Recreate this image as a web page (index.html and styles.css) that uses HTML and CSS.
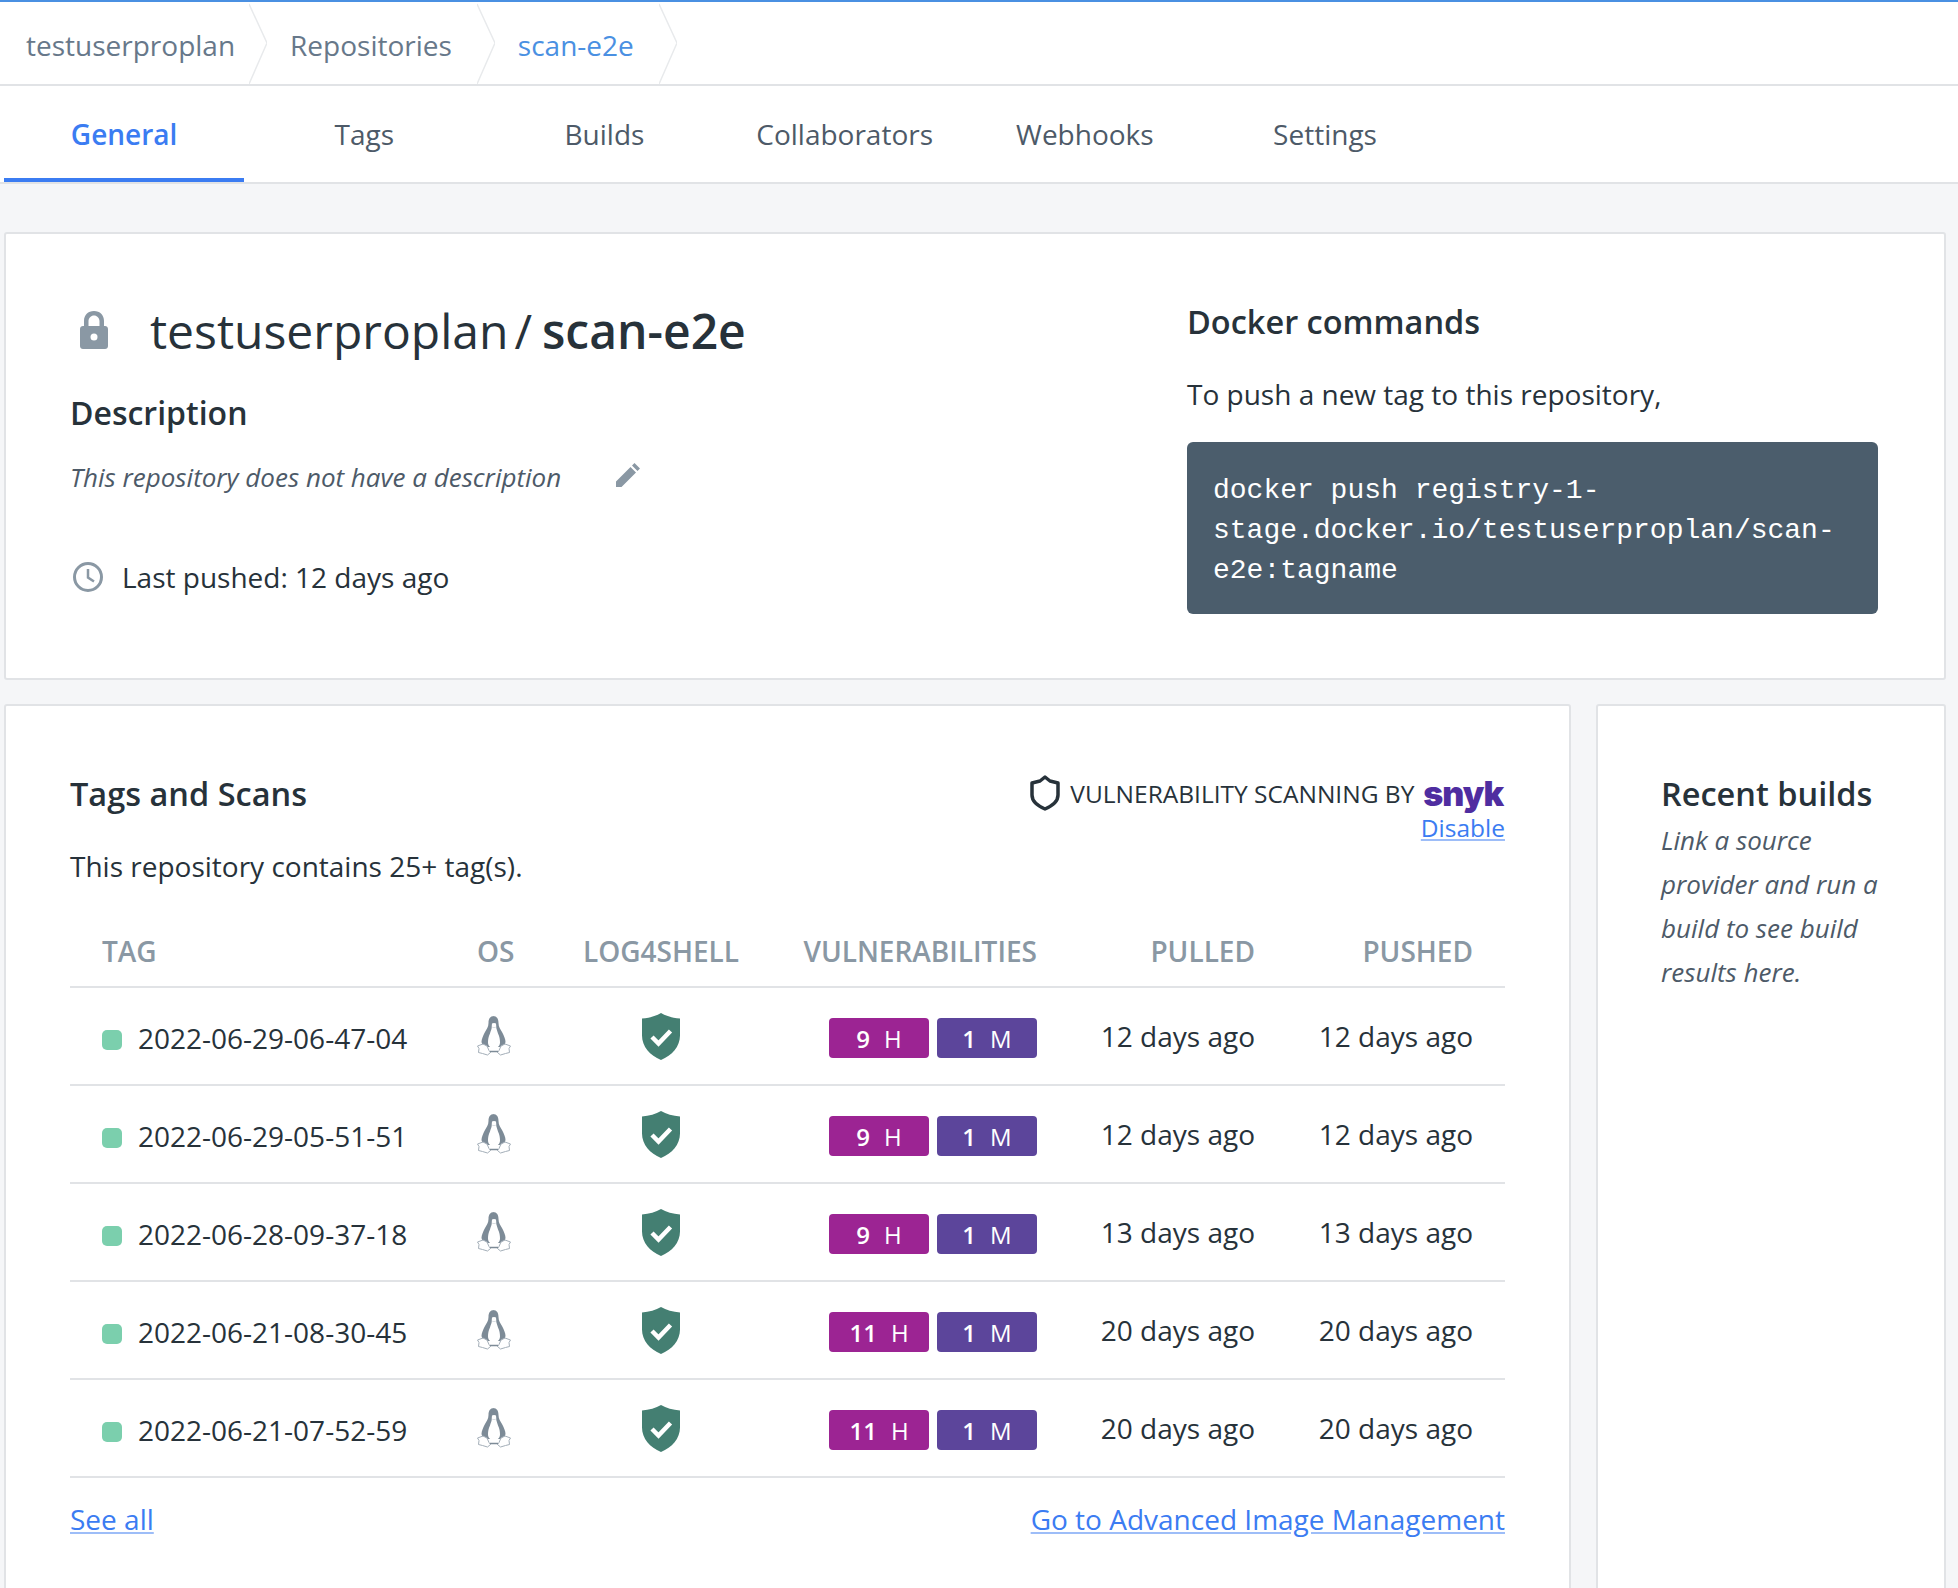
FILE: index.html
```html
<!DOCTYPE html>
<html lang="en">
<head>
    <meta charset="UTF-8">
    <title>scan-e2e</title>
    <link rel="stylesheet" href="styles.css">
</head>
<body>
    <svg class="sprites" width="0" height="0">
        <symbol id="tux" viewBox="0 0 34 40">
            <path d="M17 0c-4 0-5.500 3-5.500 7 0 4-2 6-3.500 9-2 4-3.500 7-3.500 10l1.500 5h21l1.500-5c0-3-1.500-6-3.500-10-1.500-3-3.500-5-3.500-9 0-4-1.500-7-5.500-7z" fill="#7d8b97"/>
            <path d="M15 7.500c.7-.7 3.300-.7 4 0 .3 1.500.2 3 .3 4.500.4 2 1.200 3.500 1.700 5.500 1.500 3 2 6 2 9 0 3.500-3 6-6 6s-6-2.500-6-6c0-3 .5-6 2-9 .5-2 1.300-3.500 1.700-5.500.1-1.500 0-3 .3-4.500z" fill="#fff"/>
            <path d="M14.500 10.500c1 1 4 1 5 0-.5 1.500-4.500 1.500-5 0z" fill="#9aa6b0"/>
            <path d="M6 28l4 2 2 4.500 1.500 2-3 2.500-5-1.500-4-1 .5-4-1.500-2.500z" fill="#fff" stroke="#a3aeb8"/>
            <path d="M28 28l-4 2-2 4.500-1.500 2 3 2.500 5-1.500 4-1-.5-4 1.500-2.500z" fill="#fff" stroke="#a3aeb8"/>
            <path d="M13 35.500h8" fill="none" stroke="#7d8b97" stroke-width="1.500"/>
        </symbol>
        <symbol id="shield" viewBox="0 0 38 47">
            <path d="M19 0c5 3 12 5 19 5.500v17c0 11-8 20-19 24.500C8 42.500 0 33.500 0 22.500v-17C7 5 14 3 19 0z" fill="#447f72"/>
            <path d="M10 24l6.500 6.500L28.500 18" fill="none" stroke="#fff" stroke-width="4.500"/>
        </symbol>
    </svg>

    <div class="crumbs">
        <a class="crumb">testuserproplan</a>
        <svg class="chevron first" viewBox="0 0 18 82"><polyline points="0,2 18,41 0,82" fill="none" stroke="#e8eaec" stroke-width="1.500"/></svg>
        <a class="crumb">Repositories</a>
        <svg class="chevron" viewBox="0 0 18 82"><polyline points="0,2 18,41 0,82" fill="none" stroke="#e8eaec" stroke-width="1.500"/></svg>
        <a class="crumb active">scan-e2e</a>
        <svg class="chevron" viewBox="0 0 18 82"><polyline points="0,2 18,41 0,82" fill="none" stroke="#e8eaec" stroke-width="1.500"/></svg>
    </div>

    <div class="tabs">
        <a class="tab active">General</a>
        <a class="tab">Tags</a>
        <a class="tab">Builds</a>
        <a class="tab">Collaborators</a>
        <a class="tab">Webhooks</a>
        <a class="tab">Settings</a>
    </div>

    <div class="page">
        <section class="card summary">
            <div class="summary-left">
                <div class="repo-title">
                    <svg class="lock" viewBox="0 0 28 38"><path d="M4 15v-5C4 4 8 0 14 0s10 4 10 10v5h1c1.700 0 3 1.300 3 3v17c0 1.700-1.300 3-3 3H3c-1.700 0-3-1.300-3-3V18c0-1.700 1.300-3 3-3h1zm4.500 0h11v-5c0-3-2.500-5.500-5.500-5.500S8.500 7 8.500 10v5z" fill="#8a98a4"/><circle cx="14" cy="26" r="3.500" fill="#fff"/></svg>
                    <h1>testuserproplan<span class="slash">/</span><strong>scan-e2e</strong></h1>
                </div>
                <h2 class="desc-title">Description</h2>
                <div class="desc">
                    <em>This repository does not have a description</em>
                    <svg class="pencil" viewBox="0 0 24 24"><path d="M0 24v-5.500L14.500 4l5.500 5.500L5.500 24H0zM16 2.500L18.500 0 24 5.500 21.500 8 16 2.500z" fill="#8a98a4"/></svg>
                </div>
                <div class="pushed">
                    <svg class="clock" viewBox="0 0 30 30"><circle cx="15" cy="15" r="13.500" fill="none" stroke="#8a98a4" stroke-width="3"/><path d="M15 7v8.500l6 4" fill="none" stroke="#8a98a4" stroke-width="2.500"/></svg>
                    Last pushed: 12 days ago
                </div>
            </div>
            <div class="summary-right">
                <h2>Docker commands</h2>
                <p>To push a new tag to this repository,</p>
                <code class="command">docker push registry-1-stage.docker.io/testuserproplan/scan-e2e:tagname</code>
            </div>
        </section>

        <div class="columns">
            <section class="card scans">
                <div class="scans-head">
                    <h2>Tags and Scans</h2>
                    <div class="scan-by">
                        <div class="scan-line">
                            <svg class="outline-shield" viewBox="0 0 30 36"><path d="M15 2l5 4 8 2v12c0 7-6 11-13 14C8 31 2 27 2 20V8l8-2z" fill="none" stroke="#27323a" stroke-width="3.500" stroke-linejoin="round"/></svg>
                            VULNERABILITY SCANNING BY <span class="snyk">snyk</span>
                        </div>
                        <a class="link disable">Disable</a>
                    </div>
                </div>
                <p class="tag-count">This repository contains 25+ tag(s).</p>

                <table class="tags">
                    <thead>
                        <tr>
                            <th class="c-tag">TAG</th>
                            <th class="c-os">OS</th>
                            <th class="c-log">LOG4SHELL</th>
                            <th class="c-vuln">VULNERABILITIES</th>
                            <th class="c-date">PULLED</th>
                            <th class="c-date">PUSHED</th>
                        </tr>
                    </thead>
                    <tbody>
                        <tr>
                            <td class="c-tag"><span class="dot"></span>2022-06-29-06-47-04</td>
                            <td class="c-os"><svg class="tux"><use href="#tux"/></svg></td>
                            <td class="c-log"><svg class="shield"><use href="#shield"/></svg></td>
                            <td class="c-vuln"><span class="badge high"><b>9</b>H</span><span class="badge medium"><b>1</b>M</span></td>
                            <td class="c-date">12 days ago</td>
                            <td class="c-date">12 days ago</td>
                        </tr>
                        <tr>
                            <td class="c-tag"><span class="dot"></span>2022-06-29-05-51-51</td>
                            <td class="c-os"><svg class="tux"><use href="#tux"/></svg></td>
                            <td class="c-log"><svg class="shield"><use href="#shield"/></svg></td>
                            <td class="c-vuln"><span class="badge high"><b>9</b>H</span><span class="badge medium"><b>1</b>M</span></td>
                            <td class="c-date">12 days ago</td>
                            <td class="c-date">12 days ago</td>
                        </tr>
                        <tr>
                            <td class="c-tag"><span class="dot"></span>2022-06-28-09-37-18</td>
                            <td class="c-os"><svg class="tux"><use href="#tux"/></svg></td>
                            <td class="c-log"><svg class="shield"><use href="#shield"/></svg></td>
                            <td class="c-vuln"><span class="badge high"><b>9</b>H</span><span class="badge medium"><b>1</b>M</span></td>
                            <td class="c-date">13 days ago</td>
                            <td class="c-date">13 days ago</td>
                        </tr>
                        <tr>
                            <td class="c-tag"><span class="dot"></span>2022-06-21-08-30-45</td>
                            <td class="c-os"><svg class="tux"><use href="#tux"/></svg></td>
                            <td class="c-log"><svg class="shield"><use href="#shield"/></svg></td>
                            <td class="c-vuln"><span class="badge high"><b>11</b>H</span><span class="badge medium"><b>1</b>M</span></td>
                            <td class="c-date">20 days ago</td>
                            <td class="c-date">20 days ago</td>
                        </tr>
                        <tr>
                            <td class="c-tag"><span class="dot"></span>2022-06-21-07-52-59</td>
                            <td class="c-os"><svg class="tux"><use href="#tux"/></svg></td>
                            <td class="c-log"><svg class="shield"><use href="#shield"/></svg></td>
                            <td class="c-vuln"><span class="badge high"><b>11</b>H</span><span class="badge medium"><b>1</b>M</span></td>
                            <td class="c-date">20 days ago</td>
                            <td class="c-date">20 days ago</td>
                        </tr>
                    </tbody>
                </table>

                <div class="scans-foot">
                    <a class="link">See all</a>
                    <a class="link">Go to Advanced Image Management</a>
                </div>
            </section>

            <aside class="card builds">
                <h2>Recent builds</h2>
                <em>Link a source provider and run a build to see build results here.</em>
            </aside>
        </div>
    </div>
</body>
</html>
```

FILE: styles.css
```css
html, body {
    height: 100%;
    overflow: hidden;
}
body {
    margin: 0;
    background-color: #f5f6f8;
    color: #27323a;
    font-family: "Open Sans", sans-serif;
    font-size: 28px;
}
h1, h2, p {
    margin: 0;
}
.sprites {
    position: absolute;
}

.crumbs {
    display: flex;
    align-items: center;
    height: 82px;
    padding-left: 26px;
    background-color: #ffffff;
    border-top: 2px solid #4a90e2;
    border-bottom: 2px solid #e1e3e6;
}
.crumb {
    padding-top: 4px;
    color: #67788a;
}
.crumb.active {
    color: #4a90e2;
}
.chevron {
    width: 18px;
    height: 82px;
    margin: 0 23px 0 25px;
}
.chevron.first {
    margin-left: 14px;
}

.tabs {
    display: flex;
    height: 96px;
    padding-left: 4px;
    background-color: #ffffff;
    border-bottom: 2px solid #e1e3e6;
}
.tab {
    width: 240.2px;
    box-sizing: border-box;
    display: flex;
    align-items: center;
    justify-content: center;
    color: #4d5a68;
}
.tab.active {
    color: #3b7cf2;
    font-weight: 600;
    border-bottom: 4px solid #3b7cf2;
    padding-top: 4px;
}

.page {
    padding: 48px 12px 0 4px;
}
.card {
    box-sizing: border-box;
    background-color: #ffffff;
    border: 2px solid #e1e3e6;
    border-radius: 3px;
}

.summary {
    display: flex;
    height: 448px;
    padding: 0 66px 0 64px;
}
.summary-left {
    width: 1117px;
}
.repo-title {
    display: flex;
    align-items: center;
    height: 60px;
    margin-top: 66px;
}
.lock {
    width: 28px;
    height: 38px;
    margin: 0 42px 0 10px;
}
h1 {
    font-size: 48px;
    font-weight: 400;
}
h1 strong {
    font-weight: 600;
}
.slash {
    margin: 0 10px 0 6px;
}
h2 {
    font-size: 32.5px;
    font-weight: 600;
}
.desc-title {
    margin-top: 31px;
    font-size: 32px;
}
.desc {
    display: flex;
    align-items: center;
    margin-top: 25px;
    color: #4d5a68;
    font-size: 26px;
}
.pencil {
    width: 24px;
    height: 24px;
    margin: -5px 0 0 55px;
}
.pushed {
    display: flex;
    align-items: center;
    margin-top: 63px;
    gap: 19px;
}
.clock {
    width: 30px;
    height: 30px;
    margin-left: 3px;
}
.summary-right {
    flex: 1;
    padding-top: 65px;
}
.summary-right p {
    margin-top: 31px;
}
.command {
    display: block;
    margin-top: 29px;
    padding: 29px 26px 0;
    height: 172px;
    box-sizing: border-box;
    background-color: #4b5d6c;
    border-radius: 6px;
    color: #ffffff;
    font-family: "Liberation Mono", monospace;
    font-size: 28px;
    line-height: 40px;
}

.columns {
    display: flex;
    gap: 25px;
    margin-top: 24px;
}
.scans {
    width: 1567px;
    height: 900px;
    padding: 0 64px;
}
.scans-head {
    display: flex;
    justify-content: space-between;
    margin-top: 65px;
}
.scan-by {
    padding-top: 2px;
    text-align: right;
    font-size: 24.5px;
}
.scan-line {
    display: flex;
    align-items: center;
    height: 40px;
}
.outline-shield {
    width: 30px;
    height: 36px;
    margin-right: 10px;
}
.snyk {
    margin: 0 2px 0 9px;
    color: #4f2da0;
    font-family: "Inter", sans-serif;
    font-size: 34px;
    font-weight: 900;
    letter-spacing: -1px;
}
.link {
    color: #3b7cf2;
    text-decoration: underline;
    text-decoration-color: #9dbdf8;
}
.disable {
    display: block;
    margin-top: -2px;
}
.tag-count {
    margin-top: 3px;
}

.tags {
    width: 100%;
    margin-top: 31px;
    border-collapse: collapse;
    table-layout: fixed;
}
.tags th {
    height: 70px;
    color: #8a98a4;
    font-weight: 600;
    border-bottom: 2px solid #e1e3e6;
}
.tags td {
    height: 96px;
    border-bottom: 2px solid #e1e3e6;
}
.tags th, .tags td {
    padding: 0;
}
.c-tag {
    width: 375px;
    text-align: left;
    padding-left: 32px !important;
    box-sizing: border-box;
}
td.c-tag {
    padding-top: 4px !important;
}
.c-os {
    width: 106px;
    text-align: left;
    padding-left: 32px !important;
    box-sizing: border-box;
}
.c-log {
    width: 220px;
    text-align: center;
}
.c-vuln {
    width: 298px;
    text-align: right;
    padding-right: 32px !important;
    box-sizing: border-box;
}
td.c-vuln {
    padding-top: 2px !important;
}
.c-date {
    text-align: right;
    padding-right: 32px !important;
}
.dot {
    display: inline-block;
    width: 20px;
    height: 20px;
    margin-right: 16px;
    background-color: #7bcfad;
    border-radius: 5px;
    vertical-align: -1px;
}
.tux {
    display: block;
    width: 34px;
    height: 40px;
}
.shield {
    display: block;
    width: 38px;
    height: 47px;
    margin: 0 auto;
}
.badge {
    display: inline-flex;
    align-items: center;
    justify-content: center;
    gap: 14px;
    width: 100px;
    height: 40px;
    margin-left: 8px;
    border-radius: 4px;
    color: #ffffff;
    font-size: 24px;
    vertical-align: middle;
}
.badge b {
    font-weight: 600;
}
.badge.high {
    background-color: #9c2493;
}
.badge.medium {
    background-color: #5c459b;
}
.scans-foot {
    display: flex;
    justify-content: space-between;
    margin-top: 22px;
}

.builds {
    width: 350px;
    height: 900px;
    padding: 65px 30px 0 63px;
}
.builds em {
    display: block;
    margin-top: 2px;
    color: #4d5a68;
    font-size: 26px;
    line-height: 44px;
}
```
